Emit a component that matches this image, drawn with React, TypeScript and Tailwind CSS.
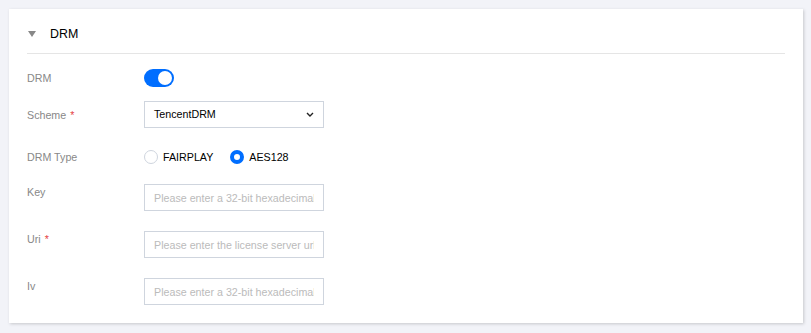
import { useState } from 'react';

const font = { fontFamily: '"Liberation Sans", Arial, sans-serif' };

function Label({ text, required, top }: { text: string; required?: boolean; top?: boolean }) {
  return (
    <div className={`w-[117px] shrink-0 text-[10.7px] text-[#888] ${top ? 'leading-[16px]' : 'leading-[18px]'}`}>
      {text}
      {required && <span className="ml-1 text-[#e54545]">*</span>}
    </div>
  );
}

function TextInput({ placeholder }: { placeholder: string }) {
  return (
    <input
      className="w-[180px] h-[27px] border border-[#cfd5de] px-[9px] text-[10.7px] text-black outline-none placeholder:text-[#bbb] bg-white"
      placeholder={placeholder}
      style={font}
    />
  );
}

function Radio({ label, checked, onClick }: { label: string; checked: boolean; onClick: () => void }) {
  return (
    <button className="flex items-center gap-[5px] cursor-pointer" onClick={onClick}>
      <span
        className={`w-[14px] h-[14px] rounded-full bg-white ${
          checked ? 'border-[4.5px] border-[#006eff]' : 'border border-[#cfd5de]'
        }`}
      />
      <span className="text-[10.7px] leading-[18px] text-black">{label}</span>
    </button>
  );
}

export default function App() {
  const [on, setOn] = useState(true);
  const [type, setType] = useState<'FAIRPLAY' | 'AES128'>('AES128');

  return (
    <div className="w-full h-[333px] bg-[#f2f3f8] pt-[9px] pl-[9px] pr-[8px]" style={font}>
      <div className="bg-white px-[18px] pb-[18px] shadow-[1px_1px_3px_rgba(0,0,0,0.18)]">
        {/* Section header */}
        <div className="pt-4 pb-[10px] border-b border-[#e5e5e5]">
          <div className="h-[18px] flex items-center">
            <svg width="8" height="6" viewBox="0 0 8 6" className="ml-[1px]">
              <polygon points="0,0 8,0 4,6" fill="#888" />
            </svg>
            <span className="ml-[14px] text-[12.4px] text-black">DRM</span>
          </div>
        </div>

        <div className="flex items-center mt-[15px]">
          <Label text="DRM" />
          <button
            className={`w-[30px] h-[18px] rounded-full flex items-center px-[2px] ${
              on ? 'bg-[#006eff] justify-end' : 'bg-[#cfd5de] justify-start'
            }`}
            onClick={() => setOn(!on)}
          >
            <span className="w-[14px] h-[14px] rounded-full bg-white" />
          </button>
        </div>

        <div className="flex items-center mt-[14px]">
          <Label text="Scheme" required />
          <div className="w-[180px] h-[27px] border border-[#cfd5de] pl-[9px] pr-[9px] flex items-center justify-between">
            <span className="text-[10.7px] text-black">TencentDRM</span>
            <svg width="8" height="5" viewBox="0 0 8 5" fill="none">
              <path d="M1 1l3 3 3-3" stroke="#222" strokeWidth="1.4" />
            </svg>
          </div>
        </div>

        <div className="flex items-center mt-[20px] h-[18px]">
          <Label text="DRM Type" />
          <div className="flex items-center gap-[17px]">
            <Radio label="FAIRPLAY" checked={type === 'FAIRPLAY'} onClick={() => setType('FAIRPLAY')} />
            <Radio label="AES128" checked={type === 'AES128'} onClick={() => setType('AES128')} />
          </div>
        </div>

        <div className="flex items-start mt-[18px]">
          <Label text="Key" top />
          <TextInput placeholder="Please enter a 32-bit hexadecimal string" />
        </div>

        <div className="flex items-start mt-[20px]">
          <Label text="Uri" required top />
          <TextInput placeholder="Please enter the license server url" />
        </div>

        <div className="flex items-start mt-[20px]">
          <Label text="Iv" top />
          <TextInput placeholder="Please enter a 32-bit hexadecimal string" />
        </div>
      </div>
    </div>
  );
}
